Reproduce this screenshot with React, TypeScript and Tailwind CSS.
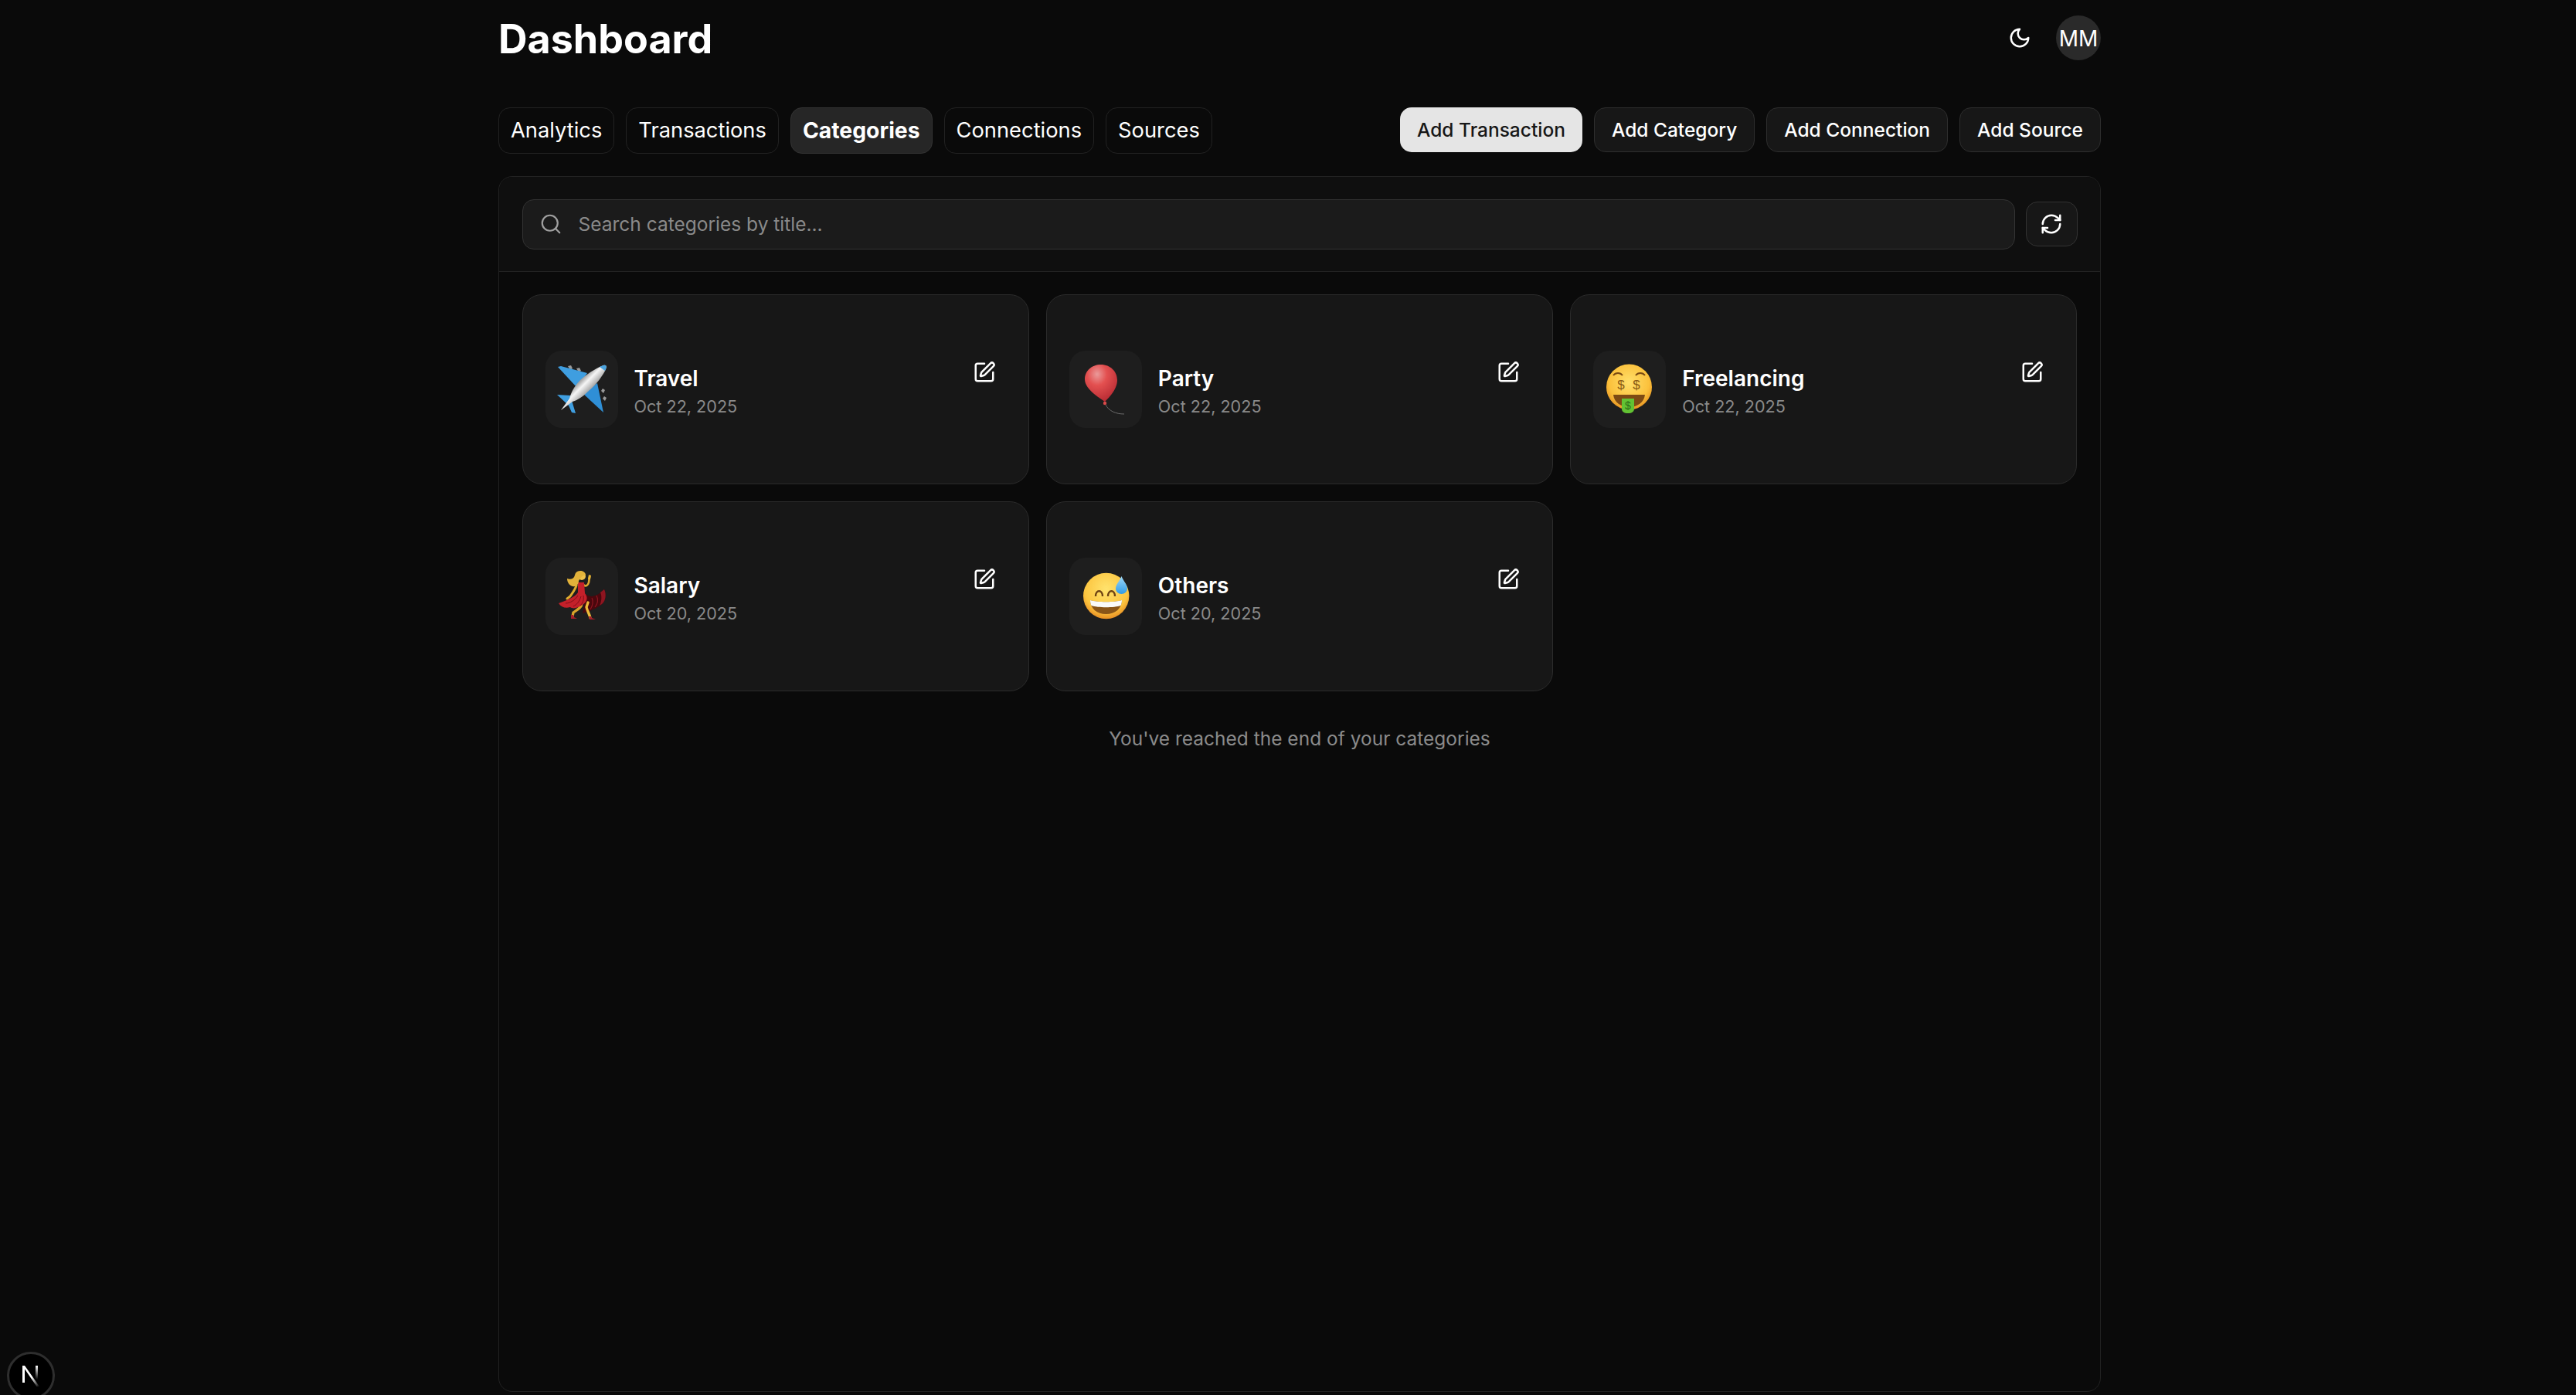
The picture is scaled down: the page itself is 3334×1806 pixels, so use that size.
import React from "react";
import { RefreshCw, Search, SquarePen } from "lucide-react";

const tabs = ["Analytics", "Transactions", "Categories", "Connections", "Sources"];
const actions = ["Add Category", "Add Connection", "Add Source"];

const Plane = () => (
  <svg width="66" height="66" viewBox="0 0 66 66">
    <defs>
      <linearGradient id="body" x1="29" y1="21" x2="43" y2="35" gradientUnits="userSpaceOnUse">
        <stop offset="0" stopColor="#8c8c8c" />
        <stop offset="0.45" stopColor="#f6f6f6" />
        <stop offset="1" stopColor="#a4a4a4" />
      </linearGradient>
    </defs>
    <path d="M15 3l4-1 2 4-3 2zM26 6l4-1 2 4-3 2zM58 35l2-3 3 2-2 4zM60 45l2-3 3 2-2 4z" fill="#9a9a9a" />
    <path d="M2 4l4-1 34 9-13 19z" fill="#3f9ee0" />
    <path d="M61 63L53 25 34 38z" fill="#2f8fd6" />
    <path d="M1 40l17 1 7 23-5-1-4-9z" fill="#3f9ee0" />
    <path d="M61 2C64 1 66 3 64 7C61 14 52 27 42 35C35 42 28 47 21 49L6 60L17 45C19 37 23 30 30 22C39 13 53 5 61 2Z" fill="url(#body)" />
    <path d="M61 2C64 1 66 3 64 7L63 9L56 4C58 3 60 2 61 2Z" fill="#4aa3df" />
  </svg>
);

const Balloon = () => (
  <svg width="66" height="66" viewBox="0 0 66 66">
    <defs>
      <radialGradient id="ball" cx="0.38" cy="0.26" r="0.75">
        <stop offset="0" stopColor="#ea9a9a" />
        <stop offset="0.4" stopColor="#e35050" />
        <stop offset="1" stopColor="#b92c34" />
      </radialGradient>
    </defs>
    <path d="M27 1C39 1 48 10 48 21C48 33 38 43 32 49C25 44 6 33 6 20C6 9 15 1 27 1Z" fill="url(#ball)" />
    <circle cx="32" cy="51" r="2.2" fill="#d94a4a" />
    <path d="M33 53C37 61 46 65 57 65" fill="none" stroke="#6a6a6a" strokeWidth="1" />
  </svg>
);

const MoneyFace = () => (
  <svg width="66" height="66" viewBox="0 0 66 66">
    <defs>
      <radialGradient id="gold" cx="0.5" cy="0.4" r="0.62">
        <stop offset="0" stopColor="#ffdf6a" />
        <stop offset="0.7" stopColor="#fbc13c" />
        <stop offset="1" stopColor="#e48f1f" />
      </radialGradient>
    </defs>
    <circle cx="32.5" cy="30" r="29.5" fill="url(#gold)" />
    <path d="M12 15C15 11 21 11 24 15M41 15C44 11 50 11 53 15" fill="none" stroke="#7a4a12" strokeWidth="2" />
    <text x="22" y="33" textAnchor="middle" fontFamily="Liberation Sans, sans-serif" fontSize="17" fill="#8a5a14">$</text>
    <text x="42" y="33" textAnchor="middle" fontFamily="Liberation Sans, sans-serif" fontSize="17" fill="#8a5a14">$</text>
    <path d="M12 40H53C52 50 43 56 32.5 56C22 56 13 50 12 40Z" fill="#7d4a14" />
    <path d="M23 45H39V58C39 62 36 64 31 64C26 64 23 62 23 58Z" fill="#62c233" />
    <text x="31" y="59" textAnchor="middle" fontFamily="Liberation Sans, sans-serif" fontSize="14" fill="#2c6b16">$</text>
  </svg>
);

const Dancer = () => (
  <svg width="66" height="66" viewBox="0 0 66 66">
    <path d="M26 19C24 25 20 30 18 33L14 36" fill="none" stroke="#e0ac2e" strokeWidth="3" strokeLinecap="round" />
    <path d="M35 18C38 21 41 19 42 15L43 8" fill="none" stroke="#e0ac2e" strokeWidth="2.6" strokeLinecap="round" />
    <path d="M42 5l3 1-1 5h-3z" fill="#e8b534" />
    <path d="M36 28C42 36 52 34 62 24C65 30 64 39 59 43C52 49 44 52 34 55C36 46 38 40 36 28Z" fill="#4a070d" />
    <path d="M62 24C65 30 64 39 59 43L56 45C59 39 59 32 57 28Z" fill="#8e1520" />
    <path d="M52 32C54 36 54 42 50 47M46 35C48 39 47 45 44 50" fill="none" stroke="#8e1520" strokeWidth="1.2" />
    <path d="M33 42C33 48 26 51 22 54L21 59" fill="none" stroke="#d9a42a" strokeWidth="3.4" strokeLinecap="round" />
    <path d="M41 41L39 47C40 52 43 56 44 61" fill="none" stroke="#edbb3a" strokeWidth="3.4" strokeLinecap="round" />
    <path d="M19 57l3 0 1 3 4 2h-8zM42 59l3 0 1 2 5 2h-8z" fill="#a5202a" />
    <path d="M28 28C24 34 14 38 3 42C6 47 12 49 18 47C22 50 28 48 34 44C40 40 42 34 36 28Z" fill="#c4202a" />
    <path d="M28 15H36L37 29H28Z" fill="#c4202a" />
    <path d="M12 42C18 42 24 38 28 32M22 46C26 44 30 40 32 33M31 45C34 42 36 38 35 32" fill="none" stroke="#7e0f17" strokeWidth="1" />
    <circle cx="33" cy="7" r="5" fill="#eec04a" />
    <path d="M38 5C37 0 31 -1 27 1C23 3 25 8 21 10C19 11 16 11 14 10C14 15 17 19 21 20C25 21 29 18 29 13C31 10 33 6 38 5Z" fill="#e2b23a" />
  </svg>
);

const SweatFace = () => (
  <svg width="66" height="66" viewBox="0 0 66 66">
    <defs>
      <radialGradient id="sweat" cx="0.5" cy="0.35" r="0.68">
        <stop offset="0" stopColor="#ffe36e" />
        <stop offset="0.7" stopColor="#fcc53f" />
        <stop offset="1" stopColor="#e6861f" />
      </radialGradient>
      <linearGradient id="drop" x1="0" y1="0" x2="0" y2="1">
        <stop offset="0" stopColor="#9fd8f8" />
        <stop offset="1" stopColor="#2f9be6" />
      </linearGradient>
    </defs>
    <circle cx="33.7" cy="32.5" r="29.7" fill="url(#sweat)" />
    <path d="M20 33C20 24 29 24 29 33M36 33C36 24 45 24 45 33" fill="none" stroke="#6e4313" strokeWidth="2.4" />
    <path d="M13 38C22 41 45 41 54 38C54 49 45 56 33.5 56C22 56 13 49 13 38Z" fill="#8a5518" />
    <path d="M13 38C22 41 45 41 54 38C54 40 53.6 43 52.5 45C44 48 23 48 14.5 45C13.4 43 13 40 13 38Z" fill="#fafafa" />
    <path d="M53.5 7C56 13 61 18 61 23C61 27 57.5 30 53.5 30C49.5 30 46 27 46 23C46 18 51 13 53.5 7Z" fill="url(#drop)" />
  </svg>
);

const categories = [
  { title: "Travel", date: "Oct 22, 2025", emoji: <Plane /> },
  { title: "Party", date: "Oct 22, 2025", emoji: <Balloon /> },
  { title: "Freelancing", date: "Oct 22, 2025", emoji: <MoneyFace /> },
  { title: "Salary", date: "Oct 20, 2025", emoji: <Dancer /> },
  { title: "Others", date: "Oct 20, 2025", emoji: <SweatFace /> },
];

export default function App() {
  return (
    <div className="relative h-[1806px] overflow-hidden bg-[#0a0a0a] font-[Inter,sans-serif] text-white">
      <div className="ml-[645px] w-[2074px] pt-[20px]">
        <header className="flex h-[58px] items-center justify-between">
          <h1 className="mt-[3px] text-[52px] leading-none font-bold">Dashboard</h1>
          <div className="flex items-center gap-[32px]">
            <svg width="30" height="30" viewBox="0 0 24 24" fill="none" stroke="currentColor" strokeWidth="2" strokeLinecap="round" strokeLinejoin="round">
              <path d="M12 3a6 6 0 0 0 9 9 9 9 0 1 1-9-9Z" />
            </svg>
            <div className="flex h-[58px] w-[58px] items-center justify-center rounded-full bg-[#2a2a2a] pt-[1px] text-[28px]">MM</div>
          </div>
        </header>

        <div className="mt-[61px] flex h-[60px] items-start justify-between">
          <nav className="flex gap-[15px]">
            {tabs.map((tab) =>
              tab === "Categories" ? (
                <div key={tab} className="flex h-[60px] items-center rounded-[15px] border border-[#333333] bg-[#262626] px-[15px] text-[28.3px] font-bold">
                  {tab}
                </div>
              ) : (
                <div key={tab} className="flex h-[60px] items-center rounded-[15px] border border-[#222222] px-[15px] pt-[1px] text-[27.3px]">
                  {tab}
                </div>
              )
            )}
          </nav>
          <div className="flex gap-[15px]">
            <button className="h-[58px] rounded-[15px] bg-[#e5e5e5] px-[22px] pt-[1px] text-[24.5px] font-medium text-[#171717]">
              Add Transaction
            </button>
            {actions.map((a) => (
              <button key={a} className="h-[58px] rounded-[15px] border border-[#2e2e2e] bg-[#171717] px-[22px] pt-[1px] text-[24.5px] font-medium">
                {a}
              </button>
            ))}
          </div>
        </div>

        <main className="mt-[29px] h-[1574px] rounded-[18px] border border-[#222222]">
          <div className="flex h-[123px] items-center gap-[14px] rounded-t-[18px] border-b border-[#222222] bg-[#0f0f0f] px-[29.5px]">
            <div className="flex h-[65px] flex-1 items-center gap-[21px] rounded-[15px] border border-[#333333] bg-[#1b1b1b] px-[21px]">
              <Search size={30} strokeWidth={1.75} className="shrink-0 text-[#a0a0a0]" />
              <input
                placeholder="Search categories by title..."
                className="w-full bg-transparent text-[24.5px] outline-none placeholder:text-[#8a8a8a]"
              />
            </div>
            <button className="flex h-[58px] w-[67px] items-center justify-center rounded-[15px] border border-[#333333] bg-[#171717]">
              <RefreshCw size={30} />
            </button>
          </div>

          <div className="grid grid-cols-3 gap-[22px] px-[29.5px] pt-[29px]">
            {categories.map((c) => (
              <div key={c.title} className="flex h-[246px] items-center justify-between rounded-[25px] border border-[#2b2b2b] bg-[#171717] px-[29px]">
                <div className="flex items-center gap-[21px]">
                  <div className="flex h-[100px] w-[94px] items-center justify-center rounded-[21px] bg-[#1e1e1e]">{c.emoji}</div>
                  <div className="mt-[3px]">
                    <div className="text-[28px] leading-[38px] font-semibold">{c.title}</div>
                    <div className="mt-[2px] text-[21.6px] leading-[30px] text-[#8a8a8a]">{c.date}</div>
                  </div>
                </div>
                <button className="mr-[13px] mb-[45px]">
                  <SquarePen size={30} />
                </button>
              </div>
            ))}
          </div>

          <p className="mt-[45px] text-center text-[24.5px] leading-[32px] text-[#8a8a8a]">You've reached the end of your categories</p>
        </main>
      </div>

      <div className="absolute top-[1750px] left-[9px] flex h-[62px] w-[62px] items-center justify-center rounded-full border-[3px] border-[#2e2e2e] bg-black">
        <svg width="26" height="30" viewBox="0 0 26 30">
          <defs>
            <linearGradient id="nfade" x1="0" y1="0" x2="1" y2="1">
              <stop offset="0.55" stopColor="#ffffff" />
              <stop offset="1" stopColor="#ffffff" stopOpacity="0" />
            </linearGradient>
            <linearGradient id="nbar" x1="0" y1="0" x2="0" y2="1">
              <stop offset="0" stopColor="#ffffff" />
              <stop offset="1" stopColor="#ffffff" stopOpacity="0" />
            </linearGradient>
          </defs>
          <path d="M2 2h3v22H2zM2 2h3l19 27h-3.5z" fill="url(#nfade)" />
          <rect x="19" y="2" width="3" height="18" fill="url(#nbar)" />
        </svg>
      </div>
    </div>
  );
}
